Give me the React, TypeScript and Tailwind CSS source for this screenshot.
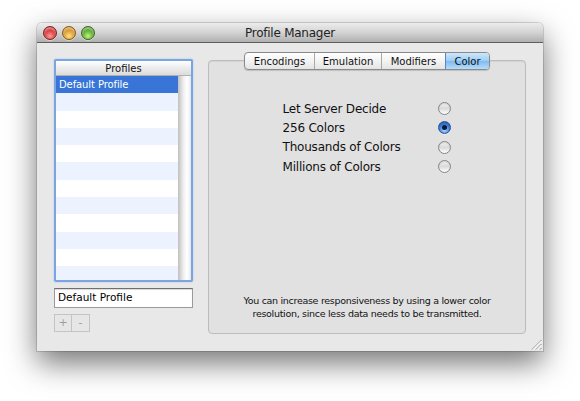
import React from "react";

const font = { fontFamily: '"DejaVu Sans", "Liberation Sans", sans-serif' };

function Light({ from, to, border }: { from: string; to: string; border: string }) {
  return (
    <div
      className="w-[14px] h-[14px] rounded-full border"
      style={{
        background: `radial-gradient(circle at 50% 75%, ${to} 0%, ${from} 70%)`,
        borderColor: border,
        boxShadow: "inset 0 2px 2px rgba(255,255,255,0.55), 0 1px 0 rgba(255,255,255,0.4)",
      }}
    />
  );
}

function Radio({ checked }: { checked?: boolean }) {
  if (checked) {
    return (
      <div className="w-[13px] h-[13px] rounded-full border border-[#2b4f8a] bg-[radial-gradient(circle_at_50%_75%,#a8d6ff_0%,#3d7ad8_55%,#1f4f9e_100%)] flex items-center justify-center shadow-[0_1px_0_rgba(255,255,255,0.5)]">
        <div className="w-[5px] h-[5px] rounded-full bg-[#0c1a33]" />
      </div>
    );
  }
  return (
    <div className="w-[13px] h-[13px] rounded-full border border-[#858585] bg-[linear-gradient(to_bottom,#f2f2f2,#dadada_50%,#ffffff)] shadow-[inset_0_1px_1px_rgba(0,0,0,0.12)]" />
  );
}

export default function App() {
  const rows = Array.from({ length: 11 });
  const options = [
    { label: "Let Server Decide", checked: false },
    { label: "256 Colors", checked: true },
    { label: "Thousands of Colors", checked: false },
    { label: "Millions of Colors", checked: false },
  ];
  const tabs = ["Encodings", "Emulation", "Modifiers", "Color"];
  const tabW = ["w-[69px]", "w-[67px]", "w-[64px]", "w-[44px]"];

  return (
    <div className="w-[580px] h-[401px] bg-white pt-[23px] pl-[37px] overflow-hidden" style={font}>
      <div className="w-[506px] h-[328px] flex flex-col rounded-t-[5px] shadow-[0_12px_30px_rgba(0,0,0,0.55),0_0_0_1px_rgba(0,0,0,0.14)]">
        {/* Title bar */}
        <div className="h-[20px] flex items-center rounded-t-[5px] bg-[linear-gradient(to_bottom,#ececec,#d3d3d3_50%,#b0b0b0)] border-b border-[#5e5e5e] relative">
          <div className="flex gap-[5px] pl-[6px] pt-[1px]">
            <Light from="#c51a1a" to="#ff9a9a" border="#7d2020" />
            <Light from="#cc7c10" to="#ffe585" border="#8a5a14" />
            <Light from="#3d8f18" to="#bff47f" border="#3a6b1c" />
          </div>
          <div className="absolute inset-0 flex items-center justify-center text-[12px] tracking-[-0.25px] text-[#222] pt-[1px]">
            Profile Manager
          </div>
        </div>

        {/* Body */}
        <div className="flex-1 bg-[#e8e8e8] flex relative">
          {/* Left column */}
          <div className="ml-[17px] mt-[16px] w-[139px] flex flex-col">
            <div className="h-[223px] border-2 border-[#7ba5e0] rounded-[2px] shadow-[0_0_2px_#9fc1ef] flex flex-col bg-white overflow-hidden">
              <div className="h-[15px] shrink-0 border-b border-[#b0b0b0] bg-[linear-gradient(to_bottom,#ffffff,#ececec_50%,#dcdcdc)] flex items-center justify-center text-[10px] text-[#111]">
                Profiles
              </div>
              <div className="flex flex-1">
                <div className="flex-1 flex flex-col">
                  <div className="h-[17.3px] shrink-0 bg-[#3875d7] text-white text-[10px] tracking-[-0.1px] flex items-center pl-[3px]">
                    Default Profile
                  </div>
                  {rows.map((_, i) => (
                    <div key={i} className={`h-[17.3px] shrink-0 ${i % 2 === 0 ? "bg-[#edf3fe]" : "bg-white"}`} />
                  ))}
                </div>
                <div className="w-[13px] bg-[linear-gradient(to_right,#c8c8c8,#f2f2f2_40%,#ffffff_70%,#e6e6e6)] border-l border-[#c4c4c4]" />
              </div>
            </div>
            <div className="mt-[6px] h-[20px] border border-[#9a9a9a] border-t-[#6f6f6f] bg-white text-[10.5px] text-black flex items-center pl-[3px] shadow-[inset_0_1px_1px_rgba(0,0,0,0.15)]">
              Default Profile
            </div>
            <div className="mt-[6px] flex">
              <div className="w-[18px] h-[18px] border border-[#c4c4c4] bg-[#e6e6e6] text-[#9e9e9e] text-[11px] flex items-center justify-center">+</div>
              <div className="w-[18px] h-[18px] border border-l-0 border-[#c4c4c4] bg-[#e6e6e6] text-[#9e9e9e] text-[11px] flex items-center justify-center">-</div>
            </div>
          </div>

          {/* Tab view */}
          <div className="ml-[15px] mt-[9px] w-[318px] flex flex-col">
            <div className="self-center flex h-[18px] relative z-10 rounded-[4px] border border-[#8a8a8a] bg-[linear-gradient(to_bottom,#ffffff,#f3f3f3_50%,#e4e4e4)] shadow-[0_1px_1px_rgba(0,0,0,0.15)] overflow-hidden">
              {tabs.map((t, i) => (
                <div
                  key={t}
                  className={`${tabW[i]} flex items-center justify-center text-[10px] text-[#111] ${i > 0 ? "border-l border-[#a8a8a8]" : ""} ${
                    t === "Color" ? "bg-[linear-gradient(to_bottom,#cfe6fb,#9ccdf5_50%,#7ebaf0_51%,#b5ddfc)] border-l-[#5c86b8]" : ""
                  }`}
                >
                  {t}
                </div>
              ))}
            </div>
            <div className="-mt-[10px] h-[274px] border border-[#bcbcbc] rounded-[4px] bg-[#e1e1e1] shadow-[inset_0_1px_1px_rgba(0,0,0,0.06)] flex flex-col items-center pt-[38px] pb-[13px]">
              <div className="grid grid-cols-[auto_auto] gap-x-[38px]">
                {options.map((o) => (
                  <React.Fragment key={o.label}>
                    <div className="h-[19.3px] flex items-center text-[12px] tracking-[-0.2px] text-[#111]">{o.label}</div>
                    <div className="h-[19.3px] flex items-center justify-end">
                      <Radio checked={o.checked} />
                    </div>
                  </React.Fragment>
                ))}
              </div>
              <div className="flex-1" />
              <div className="text-[9.5px] tracking-[-0.3px] leading-[12.5px] text-[#111] text-center">
                You can increase responsiveness by using a lower color
                <br />
                resolution, since less data needs to be transmitted.
              </div>
            </div>
          </div>

          {/* Resize grip */}
          <svg className="absolute right-[1px] bottom-[1px]" width="12" height="12" viewBox="0 0 12 12">
            <g strokeWidth="1">
              <line x1="2" y1="11.5" x2="11.5" y2="2" stroke="#8c8c8c" />
              <line x1="3" y1="11.5" x2="11.5" y2="3" stroke="#ffffff" />
              <line x1="6" y1="11.5" x2="11.5" y2="6" stroke="#8c8c8c" />
              <line x1="7" y1="11.5" x2="11.5" y2="7" stroke="#ffffff" />
              <line x1="10" y1="11.5" x2="11.5" y2="10" stroke="#8c8c8c" />
            </g>
          </svg>
        </div>
      </div>
    </div>
  );
}
